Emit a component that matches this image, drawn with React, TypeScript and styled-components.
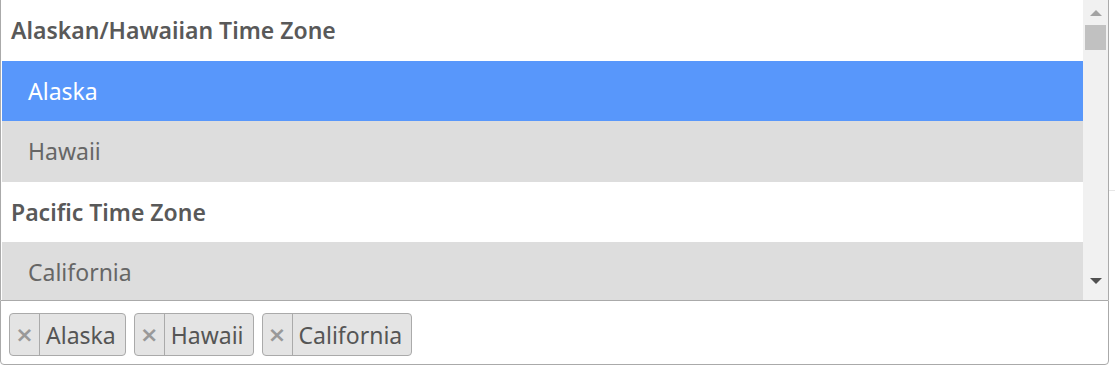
import styled, { createGlobalStyle } from 'styled-components';

const GlobalStyle = createGlobalStyle`
  html, body {
    margin: 0;
    padding: 0;
    background: #fff;
  }
  body {
    font-family: 'Noto Sans', 'Open Sans', sans-serif;
    color: #555;
  }
`;

interface IGroup {
  label: string;
  options: string[];
}

const groups: IGroup[] = [
  { label: 'Alaskan/Hawaiian Time Zone', options: ['Alaska', 'Hawaii'] },
  { label: 'Pacific Time Zone', options: ['California'] },
];

const selected = ['Alaska', 'Hawaii', 'California'];
const highlighted = 'Alaska';

const Page = styled.div`
  display: flex;
  align-items: flex-start;
`;

const Select = styled.div`
  width: 1109px;
  display: flex;
  flex-direction: column;
`;

const Dropdown = styled.div`
  height: 300px;
  display: flex;
  border-left: 1px solid #aaa;
  border-right: 1px solid #aaa;
  box-sizing: border-box;
  background: #fff;
`;

const Results = styled.ul`
  flex: 1;
  list-style: none;
  margin: 0;
  padding: 0 0 0 1px;
  overflow: hidden;
`;

const GroupItem = styled.li`
  list-style: none;
`;

const Nested = styled.ul`
  margin: 0;
  padding: 0;
  list-style: none;
`;

const GroupLabel = styled.li`
  padding: 12px 9px;
  line-height: 36.5px;
  font-size: 23px;
  font-weight: 600;
  color: #595959;
`;

const Option = styled.li<{ $active: boolean }>`
  padding: 12px 26px;
  line-height: 36.5px;
  font-size: 23px;
  color: ${(p) => (p.$active ? '#fff' : '#666')};
  background: ${(p) => (p.$active ? '#5897fb' : '#ddd')};
`;

const Scrollbar = styled.div`
  width: 25px;
  background: #f1f1f1;
  display: flex;
  flex-direction: column;
  align-items: center;
  padding-top: 10px;
  box-sizing: border-box;
`;

const Arrow = styled.div<{ $down?: boolean; $color: string }>`
  width: 0;
  height: 0;
  border-left: 6px solid transparent;
  border-right: 6px solid transparent;
  ${(p) =>
    p.$down
      ? `border-top: 6px solid ${p.$color};`
      : `border-bottom: 6px solid ${p.$color};`}
`;

const Thumb = styled.div`
  width: 21px;
  height: 25px;
  margin-top: 9px;
  background: #c1c1c1;
  flex: none;
`;

const Track = styled.div`
  flex: 1;
`;

const BottomArrowBox = styled.div`
  height: 22px;
`;

const Selection = styled.div`
  height: 65px;
  box-sizing: border-box;
  border: 1px solid #aaa;
  border-radius: 0 0 4px 4px;
  padding: 12px 8px 0;
  display: flex;
  gap: 8px;
  align-items: flex-start;
`;

const Tag = styled.div`
  display: flex;
  align-items: stretch;
  height: 43px;
  box-sizing: border-box;
  background: #e4e4e4;
  border: 1px solid #aaa;
  border-radius: 4px;
  font-size: 23px;
  color: #555;
`;

const Remove = styled.span`
  width: 29px;
  display: flex;
  align-items: center;
  justify-content: center;
  border-right: 1px solid #aaa;
  color: #999;
  font-size: 22px;
  font-weight: 700;
  font-family: 'DejaVu Sans', sans-serif;
`;

const TagLabel = styled.span`
  display: flex;
  align-items: center;
  padding: 0 9px 0 6px;
`;

const Backdrop = styled.div`
  flex: 1;
  padding-top: 190px;
`;

const Rule = styled.div`
  height: 1px;
  background: #e6e6e6;
`;

function App() {
  return (
    <>
      <GlobalStyle />
      <Page>
        <Select>
          <Dropdown>
            <Results>
              {groups.map((group) => (
                <GroupItem key={group.label}>
                  <Nested>
                    <GroupLabel>{group.label}</GroupLabel>
                    {group.options.map((opt) => (
                      <Option key={opt} $active={opt === highlighted}>
                        {opt}
                      </Option>
                    ))}
                  </Nested>
                </GroupItem>
              ))}
            </Results>
            <Scrollbar>
              <Arrow $color="#a3a3a3" />
              <Thumb />
              <Track />
              <BottomArrowBox>
                <Arrow $down $color="#505050" />
              </BottomArrowBox>
            </Scrollbar>
          </Dropdown>
          <Selection>
            {selected.map((item) => (
              <Tag key={item}>
                <Remove>×</Remove>
                <TagLabel>{item}</TagLabel>
              </Tag>
            ))}
          </Selection>
        </Select>
        <Backdrop>
          <Rule />
        </Backdrop>
      </Page>
    </>
  );
}

export default App;
